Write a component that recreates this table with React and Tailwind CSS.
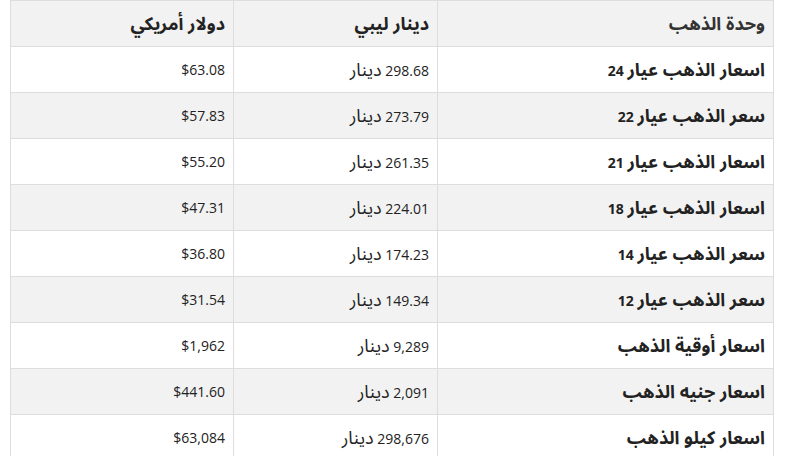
const rows = [
  ["اسعار الذهب عيار", "24", "298.68", "$63.08"],
  ["سعر الذهب عيار", "22", "273.79", "$57.83"],
  ["اسعار الذهب عيار", "21", "261.35", "$55.20"],
  ["اسعار الذهب عيار", "18", "224.01", "$47.31"],
  ["سعر الذهب عيار", "14", "174.23", "$36.80"],
  ["سعر الذهب عيار", "12", "149.34", "$31.54"],
  ["اسعار أوقية الذهب", "", "9,289", "$1,962"],
  ["اسعار جنيه الذهب", "", "2,091", "$441.60"],
  ["اسعار كيلو الذهب", "", "298,676", "$63,084"],
];

const cell = "h-[46px] border border-[#dddddd] px-2 text-right align-middle";
const ar = "text-[18px]";

export default function App() {
  return (
    <div className="min-h-screen bg-white pl-[10px] pr-[18px] text-[14px] text-[#222]" style={{ fontFamily: '"Open Sans", "Noto Sans Arabic", "Noto Sans", "DejaVu Sans", sans-serif' }}>
      <table dir="rtl" className="w-[763px] table-fixed border-collapse">
        <colgroup>
          <col className="w-[336px]" />
          <col className="w-[204px]" />
          <col className="w-[223px]" />
        </colgroup>
        <thead>
          <tr className="bg-[#f2f2f2]">
            <th className={`${cell} font-bold text-[#333]`}><span className={ar}>وحدة الذهب</span></th>
            <th className={`${cell} font-bold`}><span className={ar}>دينار ليبي</span></th>
            <th className={`${cell} font-bold`}><span className={ar}>دولار أمريكي</span></th>
          </tr>
        </thead>
        <tbody>
          {rows.map((r, i) => (
            <tr key={i} className={i % 2 === 1 ? "bg-[#f2f2f2]" : "bg-white"}>
              <td className={`${cell} font-bold`}>
                <span className={ar}>{r[0]}</span>
                {r[1] && <> {r[1]}</>}
              </td>
              <td className={cell}>
                {r[2]} <span className={ar}>دينار</span>
              </td>
              <td className={cell}>{r[3]}</td>
            </tr>
          ))}
        </tbody>
      </table>
    </div>
  );
}
